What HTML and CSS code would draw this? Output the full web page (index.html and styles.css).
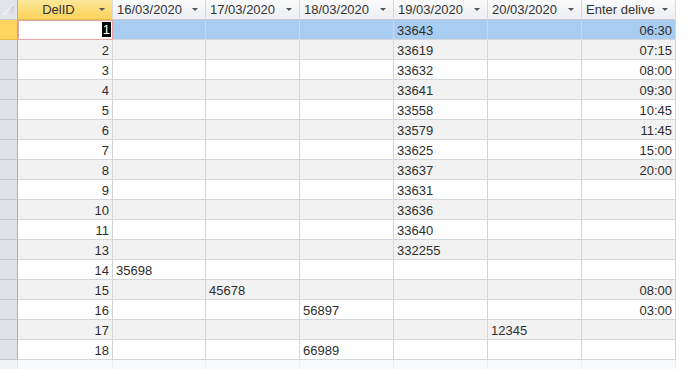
FILE: index.html
```html
<!DOCTYPE html>
<html>
<head>
<meta charset="utf-8">
<link rel="stylesheet" href="styles.css">
</head>
<body>
<div class="sheet">
  <div class="row head">
    <div class="corner"><svg width="17" height="19" viewBox="0 0 17 19"><defs><linearGradient id="g" x1="0" y1="1" x2="1" y2="0"><stop offset="0" stop-color="#eef0f3"/><stop offset="1" stop-color="#c9cdd3"/></linearGradient></defs><polygon points="14,4 14,15 3,15" fill="url(#g)"/><line x1="3" y1="15" x2="14" y2="4" stroke="#f7f8fa" stroke-width="1"/></svg></div>
    <div class="hc active"><span class="ht center">DelID</span><span class="arr"></span></div>
    <div class="hc"><span class="ht">16/03/2020</span><span class="arr"></span></div>
    <div class="hc"><span class="ht">17/03/2020</span><span class="arr"></span></div>
    <div class="hc"><span class="ht">18/03/2020</span><span class="arr"></span></div>
    <div class="hc"><span class="ht">19/03/2020</span><span class="arr"></span></div>
    <div class="hc"><span class="ht">20/03/2020</span><span class="arr"></span></div>
    <div class="hc"><span class="ht">Enter delive</span><span class="arr"></span></div>
  </div>

  <div class="row sel">
    <div class="rs cur"></div>
    <div class="c num focus"><span class="hl">1</span></div>
    <div class="c"></div><div class="c"></div><div class="c"></div>
    <div class="c">33643</div><div class="c"></div><div class="c num">06:30</div>
  </div>
  <div class="row alt">
    <div class="rs"></div><div class="c num">2</div>
    <div class="c"></div><div class="c"></div><div class="c"></div>
    <div class="c">33619</div><div class="c"></div><div class="c num">07:15</div>
  </div>
  <div class="row">
    <div class="rs"></div><div class="c num">3</div>
    <div class="c"></div><div class="c"></div><div class="c"></div>
    <div class="c">33632</div><div class="c"></div><div class="c num">08:00</div>
  </div>
  <div class="row alt">
    <div class="rs"></div><div class="c num">4</div>
    <div class="c"></div><div class="c"></div><div class="c"></div>
    <div class="c">33641</div><div class="c"></div><div class="c num">09:30</div>
  </div>
  <div class="row">
    <div class="rs"></div><div class="c num">5</div>
    <div class="c"></div><div class="c"></div><div class="c"></div>
    <div class="c">33558</div><div class="c"></div><div class="c num">10:45</div>
  </div>
  <div class="row alt">
    <div class="rs"></div><div class="c num">6</div>
    <div class="c"></div><div class="c"></div><div class="c"></div>
    <div class="c">33579</div><div class="c"></div><div class="c num">11:45</div>
  </div>
  <div class="row">
    <div class="rs"></div><div class="c num">7</div>
    <div class="c"></div><div class="c"></div><div class="c"></div>
    <div class="c">33625</div><div class="c"></div><div class="c num">15:00</div>
  </div>
  <div class="row alt">
    <div class="rs"></div><div class="c num">8</div>
    <div class="c"></div><div class="c"></div><div class="c"></div>
    <div class="c">33637</div><div class="c"></div><div class="c num">20:00</div>
  </div>
  <div class="row">
    <div class="rs"></div><div class="c num">9</div>
    <div class="c"></div><div class="c"></div><div class="c"></div>
    <div class="c">33631</div><div class="c"></div><div class="c num"></div>
  </div>
  <div class="row alt">
    <div class="rs"></div><div class="c num">10</div>
    <div class="c"></div><div class="c"></div><div class="c"></div>
    <div class="c">33636</div><div class="c"></div><div class="c num"></div>
  </div>
  <div class="row">
    <div class="rs"></div><div class="c num">11</div>
    <div class="c"></div><div class="c"></div><div class="c"></div>
    <div class="c">33640</div><div class="c"></div><div class="c num"></div>
  </div>
  <div class="row alt">
    <div class="rs"></div><div class="c num">13</div>
    <div class="c"></div><div class="c"></div><div class="c"></div>
    <div class="c">332255</div><div class="c"></div><div class="c num"></div>
  </div>
  <div class="row">
    <div class="rs"></div><div class="c num">14</div>
    <div class="c">35698</div><div class="c"></div><div class="c"></div>
    <div class="c"></div><div class="c"></div><div class="c num"></div>
  </div>
  <div class="row alt">
    <div class="rs"></div><div class="c num">15</div>
    <div class="c"></div><div class="c">45678</div><div class="c"></div>
    <div class="c"></div><div class="c"></div><div class="c num">08:00</div>
  </div>
  <div class="row">
    <div class="rs"></div><div class="c num">16</div>
    <div class="c"></div><div class="c"></div><div class="c">56897</div>
    <div class="c"></div><div class="c"></div><div class="c num">03:00</div>
  </div>
  <div class="row alt">
    <div class="rs"></div><div class="c num">17</div>
    <div class="c"></div><div class="c"></div><div class="c"></div>
    <div class="c"></div><div class="c">12345</div><div class="c num"></div>
  </div>
  <div class="row">
    <div class="rs"></div><div class="c num">18</div>
    <div class="c"></div><div class="c"></div><div class="c">66989</div>
    <div class="c"></div><div class="c"></div><div class="c num"></div>
  </div>
  <div class="row ghost">
    <div class="rs"></div><div class="c"></div>
    <div class="c"></div><div class="c"></div><div class="c"></div>
    <div class="c"></div><div class="c"></div><div class="c"></div>
  </div>
</div>
</body>
</html>
```
FILE: styles.css
```css
html, body {
  margin: 0;
  padding: 0;
  background: #ffffff;
  overflow: hidden;
}
body {
  width: 691px;
  height: 369px;
  font-family: "Liberation Sans", Arial, sans-serif;
  font-size: 13px;
  color: #2e2e2e;
}
.sheet {
  width: 676px;
}
.row {
  display: grid;
  grid-template-columns: 18px 95px 93px 94px 94px 94px 94px 94px;
  height: 20px;
}
.row > div {
  box-sizing: border-box;
  border-right: 1px solid #d3d6da;
  border-bottom: 1px solid #d3d6da;
  overflow: hidden;
  white-space: nowrap;
}
.head > div {
  background: linear-gradient(#fbfbfc, #eceef1);
  border-bottom: 1px solid #c6cace;
  border-right: 1px solid #d6d9dd;
  display: flex;
  align-items: center;
}
.head > .corner {
  background: #e1e4e8;
  border-right: 1px solid #a9b0b8;
  border-bottom: 1px solid #c3c8ce;
}
.corner svg { display: block; }
.hc {
  padding: 0 4px 0 4px;
  gap: 4px;
}
.head > .hc.active {
  background: linear-gradient(#fde79a, #fbd35a);
  border-bottom-color: #e3bc4b;
}
.ht {
  flex: 1;
  overflow: hidden;
  white-space: nowrap;
  line-height: 19px;
  color: #333333;
}
.ht.center { text-align: center; }
.arr {
  flex: none;
  width: 0;
  height: 0;
  margin-right: 3px;
  border-left: 3px solid transparent;
  border-right: 3px solid transparent;
  border-top: 3px solid #555555;
}
.c {
  line-height: 19px;
  padding: 1px 3px 0 3px;
}
.num { text-align: right; padding-right: 3px; }
.rs {
  background: #dfe3e8;
}
.row > .rs {
  border-right: 1px solid #a9b0b8;
  border-bottom: 1px solid #c3c8ce;
}
.row > .rs.cur {
  background: #fcd65e;
  border-bottom-color: #e2bd4e;
}
.alt > .c { background: #f2f2f2; }
.sel > .c { background: #a8cdf1; }
.sel > .c.focus {
  background: #ffffff;
  border: 1px solid #e9a3a8;
  padding: 0 1px 0 0;
  line-height: 18px;
}
.hl {
  background: #000000;
  color: #ffffff;
  padding: 0 1px;
}
.ghost > div {
  background: #f8f9fa;
  border-right-color: #eceef0;
  border-bottom: none;
}
.ghost > .rs {
  background: #f1f3f5;
  border-right: 1px solid #e6e8eb;
  border-bottom: none;
}
```
